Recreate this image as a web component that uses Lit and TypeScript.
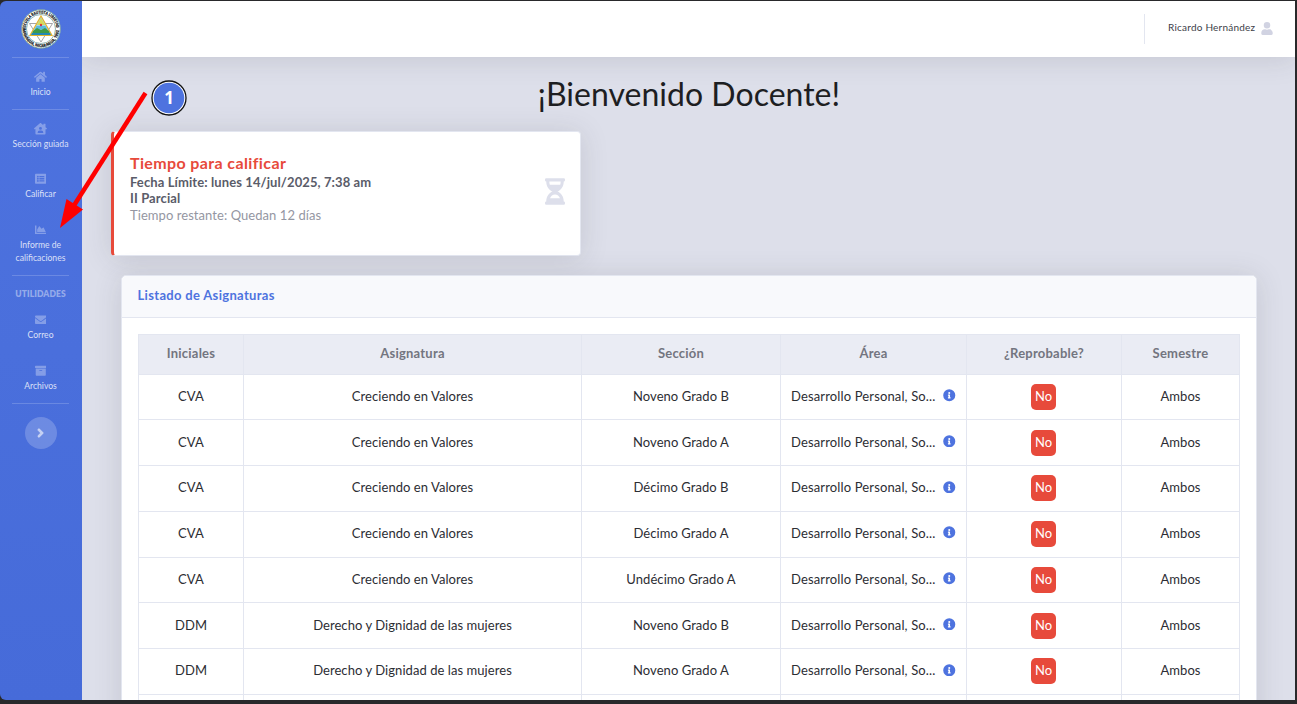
import { LitElement, html, css, svg } from "lit";
import { customElement } from "lit/decorators.js";

const ICONS: Record<string, [string, string]> = {
  home: ["0 0 576 512", "M280.37 148.26L96 300.11V464a16 16 0 0 0 16 16l112.06-.29a16 16 0 0 0 15.92-16V368a16 16 0 0 1 16-16h64a16 16 0 0 1 16 16v95.64a16 16 0 0 0 16 16.05L464 480a16 16 0 0 0 16-16V300L295.67 148.26a12.19 12.19 0 0 0-15.3 0zM571.6 251.47L488 182.56V44.05a12 12 0 0 0-12-12h-56a12 12 0 0 0-12 12v72.61L318.47 43a48 48 0 0 0-61 0L4.34 251.47a12 12 0 0 0-1.6 16.9l25.5 31A12 12 0 0 0 45.15 301l235.22-193.74a12.19 12.19 0 0 1 15.3 0L530.9 301a12 12 0 0 0 16.9-1.6l25.5-31a12 12 0 0 0-1.7-16.93z"],
  houseUser: ["0 0 576 512", "M570.7 236.3L512 184.4V48a16 16 0 0 0-16-16h-64a16 16 0 0 0-16 16v51.7L314.8 10.3C308.500 4.600 296.500 0 288 0s-20.500 4.600-26.700 10.300L5.300 236.300A18.300 18.300 0 0 0 0 248.200a18.600 18.600 0 0 0 4.200 10.700l21.400 23.800a18.200 18.200 0 0 0 11.900 5.300 18.600 18.600 0 0 0 10.700-4.200L64 269.900V480a32 32 0 0 0 32 32h384a32 32 0 0 0 32-32V269.900l15.900 14a18.600 18.600 0 0 0 10.700 4.200 18.200 18.200 0 0 0 11.900-5.300l21.400-23.800a18.600 18.600 0 0 0 4.100-10.700 18.300 18.300 0 0 0-5.300-12zM288 176a64 64 0 1 1 0 128 64 64 0 0 1 0-128zM400 448H176a16 16 0 0 1-16-16 96 96 0 0 1 96-96h64a96 96 0 0 1 96 96 16 16 0 0 1-16 16z"],
  list: ["0 0 512 512", "M464 480H48c-26.500 0-48-21.500-48-48V80c0-26.500 21.500-48 48-48h416c26.500 0 48 21.500 48 48v352c0 26.500-21.500 48-48 48zM128 120a40 40 0 1 0 0 80 40 40 0 0 0 0-80zm0 96a40 40 0 1 0 0 80 40 40 0 0 0 0-80zm0 96a40 40 0 1 0 0 80 40 40 0 0 0 0-80zm288-136v-32a12 12 0 0 0-12-12H204a12 12 0 0 0-12 12v32a12 12 0 0 0 12 12h200a12 12 0 0 0 12-12zm0 96v-32a12 12 0 0 0-12-12H204a12 12 0 0 0-12 12v32a12 12 0 0 0 12 12h200a12 12 0 0 0 12-12zm0 96v-32a12 12 0 0 0-12-12H204a12 12 0 0 0-12 12v32a12 12 0 0 0 12 12h200a12 12 0 0 0 12-12z"],
  chart: ["0 0 512 512", "M500 384c6.600 0 12 5.400 12 12v40c0 6.600-5.400 12-12 12H12c-6.600 0-12-5.400-12-12V76c0-6.600 5.400-12 12-12h40c6.600 0 12 5.400 12 12v308h436zM372.700 159.500L288 216l-85.300-113.700c-5.100-6.800-15.500-6.300-19.900 1L96 248v104h384l-89.900-187.800c-3.200-6.500-11.400-8.700-17.400-4.700z"],
  mail: ["0 0 512 512", "M502.3 190.8c3.9-3.1 9.7-.2 9.7 4.7V400c0 26.5-21.5 48-48 48H48c-26.5 0-48-21.5-48-48V195.6c0-5 5.7-7.8 9.7-4.7 22.4 17.4 52.1 39.5 154.1 113.6 21.1 15.4 56.7 47.8 92.2 47.6 35.7.3 72-32.8 92.3-47.6 102-74.1 131.6-96.3 154-113.7zM256 320c23.2.4 56.6-29.2 73.4-41.4 132.7-96.3 142.8-104.7 173.4-128.7 5.8-4.5 9.2-11.5 9.2-18.9v-19c0-26.5-21.5-48-48-48H48c-26.5 0-48 21.5-48 48v19c0 7.4 3.4 14.3 9.2 18.9 30.6 23.9 40.7 32.4 173.4 128.7 16.8 12.2 50.2 41.8 73.4 41.4z"],
  archive: ["0 0 512 512", "M32 448c0 17.7 14.3 32 32 32h384c17.7 0 32-14.3 32-32V160H32v288zm160-212c0-6.6 5.4-12 12-12h104c6.6 0 12 5.4 12 12v8c0 6.6-5.4 12-12 12H204c-6.6 0-12-5.4-12-12v-8zM480 32H32C14.3 32 0 46.3 0 64v48c0 8.8 7.2 16 16 16h480c8.8 0 16-7.2 16-16V64c0-17.7-14.3-32-32-32z"],
  user: ["0 0 448 512", "M224 256a128 128 0 1 0 0-256 128 128 0 0 0 0 256zm89.6 32h-16.7c-22.2 10.2-46.9 16-72.9 16s-50.6-5.8-72.9-16h-16.7C60.2 288 0 348.2 0 422.400V464c0 26.500 21.500 48 48 48h352c26.500 0 48-21.500 48-48v-41.600c0-74.200-60.200-134.400-134.400-134.400z"],
  info: ["0 0 512 512", "M256 8a248 248 0 1 0 0 496 248 248 0 0 0 0-496zm0 110a42 42 0 1 1 0 84 42 42 0 0 1 0-84zm56 254a12 12 0 0 1-12 12h-88a12 12 0 0 1-12-12v-24a12 12 0 0 1 12-12h12v-64h-12a12 12 0 0 1-12-12v-24a12 12 0 0 1 12-12h64a12 12 0 0 1 12 12v100h12a12 12 0 0 1 12 12v24z"],
  hourglass: ["0 0 384 512", "M360 0H24A24 24 0 0 0 0 24v16a24 24 0 0 0 24 24c0 91 51 167.700 120.800 192C75 280.300 24 357 24 448a24 24 0 0 0-24 24v16a24 24 0 0 0 24 24h336a24 24 0 0 0 24-24v-16a24 24 0 0 0-24-24c0-91-51-167.700-120.800-192C309 231.700 360 155 360 64a24 24 0 0 0 24-24V24a24 24 0 0 0-24-24zM288 384H96c17-42 50-72 96-72s79 30 96 72zM92 128c-6-20-9-42-9-64h218c0 22-3 44-9 64z"],
  angle: ["0 0 256 512", "M224.300 273l-136 136c-9.400 9.400-24.600 9.400-33.900 0l-22.600-22.600c-9.400-9.400-9.400-24.600 0-33.900l96.400-96.400-96.400-96.400c-9.400-9.400-9.400-24.600 0-33.900L54.300 103c9.400-9.400 24.600-9.400 33.900 0l136 136c9.500 9.400 9.500 24.600.1 34z"],
};

const icon = (name: string, cls: string) =>
  html`<svg class=${cls} viewBox=${ICONS[name][0]} fill="currentColor" aria-hidden="true">${svg`<path fill-rule="evenodd" d=${ICONS[name][1]}></path>`}</svg>`;

@customElement("side-bar")
class SideBar extends LitElement {
  static styles = css`
    :host { display: flex; flex-direction: column; align-items: center; width: 82px; box-sizing: border-box; padding-right: 1px; flex: none; color: rgba(255,255,255,.8);
      background: linear-gradient(#4e73df, #466bd9); border-radius: 6px 0 0 6px; overflow: hidden; font-size: 8.6px; line-height: 13px; }
    .logo { width: 40px; height: 40px; margin-top: 8px; flex: none; }
    .ring { font: 700 4px "Open Sans", sans-serif; fill: #1f2a2a; stroke: #1f2a2a; stroke-width: .25; }
    hr { width: 57px; height: 1px; border: 0; margin: 0; background: rgba(255,255,255,.18); flex: none; }
    .first { margin-top: 8px; }
    .item { display: flex; flex-direction: column; align-items: center; text-align: center; flex: none; width: 81px; box-sizing: border-box; height: 51px; padding-top: 13px; }
    .ico { height: 11.500px; color: rgba(255,255,255,.32); margin-bottom: 3.700px; }
    .grade { padding-top: 12px; }
    .report { height: 63px; padding-top: 12px; }
    .heading { font-weight: 800; font-size: 8.5px; color: rgba(255,255,255,.42); margin-top: 12px; letter-spacing: .1px; flex: none; }
    .toggle { width: 32px; height: 32px; border-radius: 50%; background: rgba(255,255,255,.2); display: flex; align-items: center; justify-content: center; margin-top: 13px; flex: none; }
    .angle { height: 14px; color: rgba(255,255,255,.6); margin-bottom: 1px; stroke: currentColor; stroke-width: 16; }
  `;
  render() {
    const item = (i: string, cls: string, label: unknown) => html`<div class="item ${cls}">${icon(i, "ico")}<span>${label}</span></div>`;
    return html`
      <svg class="logo" viewBox="0 0 40 40">
        <defs><path id="ringTop" d="M4.600 20a15.400 15.400 0 0 1 30.800 0"></path><path id="ringBottom" d="M1.900 20a18.100 18.100 0 0 0 36.200 0"></path></defs>
        <circle cx="20" cy="20" r="19.600" fill="#fff"></circle>
        <circle cx="20" cy="20" r="19.300" fill="none" stroke="#5d8f8e" stroke-width=".8"></circle>
        <circle cx="20" cy="20" r="14.500" fill="#fff" stroke="#6c9a98" stroke-width=".7"></circle>
        <text class="ring"><textPath href="#ringTop" textLength="47" lengthAdjust="spacingAndGlyphs">ESCUELA BAUTISTA LIBERTAD</textPath></text>
        <text class="ring"><textPath href="#ringBottom" textLength="55" lengthAdjust="spacingAndGlyphs">MANAGUA, NICARAGUA, 1992</textPath></text>
        <path d="M8.500 14.500h23L20 33z" fill="#fff" stroke="#9b9b9b" stroke-width=".9"></path>
        <path d="M20 7L31 26.500H9z" fill="#9ed7ef" stroke="#e6b32e" stroke-width="1.200"></path>
        <path d="M20 9l4 7h-8z" fill="#d9dc58"></path>
        <path d="M15.500 17h9l2 3.500h-13z" fill="#5bb9df"></path>
        <path d="M12 22l4-3 4 2 4-2 4 3 1 3H11z" fill="#3f9a48"></path>
        <path d="M11 24h18l1 2H10z" fill="#2389b5"></path>
        <circle cx="20" cy="16" r="1.200" fill="#d4343f"></circle>
      </svg>
      <hr class="first" />
      ${item("home", "home", "Inicio")}
      <hr />
      ${item("houseUser", "guide", "Sección guiada")}
      ${item("list", "grade", "Calificar")}
      ${item("chart", "report", html`Informe de<br />calificaciones`)}
      <hr />
      <div class="heading">UTILIDADES</div>
      ${item("mail", "mail", "Correo")}
      ${item("archive", "mail", "Archivos")}
      <hr />
      <div class="toggle">${icon("angle", "angle")}</div>`;
  }
}

const ROWS = [
  ["CVA", "Creciendo en Valores", "Noveno Grado B"],
  ["CVA", "Creciendo en Valores", "Noveno Grado A"],
  ["CVA", "Creciendo en Valores", "Décimo Grado B"],
  ["CVA", "Creciendo en Valores", "Décimo Grado A"],
  ["CVA", "Creciendo en Valores", "Undécimo Grado A"],
  ["DDM", "Derecho y Dignidad de las mujeres", "Noveno Grado B"],
  ["DDM", "Derecho y Dignidad de las mujeres", "Noveno Grado A"],
  ["", "", ""],
];

@customElement("subject-table")
class SubjectTable extends LitElement {
  static styles = css`
    :host { display: block; border-left: 1px solid #e3e6f0; border-top: 1px solid #e3e6f0; color: #2c2d33; font-size: 13px; letter-spacing: .06px; }
    .row { display: grid; grid-template-columns: 105px 338px 199px 186px 155px 118px; height: 45.75px; }
    .head { height: 39.6px; background: #eaecf4; color: #73757f; font-weight: 700; letter-spacing: .22px; }
    .cell { border-right: 1px solid #e3e6f0; border-bottom: 1px solid #e3e6f0; display: flex; align-items: center; justify-content: center; white-space: nowrap; padding: 0 0 2.400px 0; }
    .area { justify-content: flex-start; padding-left: 10px; letter-spacing: .14px; }
    .head .cell { padding-bottom: 1.800px; }
    .info { width: 12.500px; height: 12.500px; color: #4e73df; margin: 0 10.500px 1px auto; }
    .badge { background: #e74a3b; color: #fff; border-radius: 5px; width: 25px; height: 26px; line-height: 24px; text-align: center; margin: 2px 1px 0 0; }
  `;
  render() {
    return html`
      <div class="row head">${["Iniciales", "Asignatura", "Sección", "Área", "¿Reprobable?", "Semestre"].map((h) => html`<div class="cell">${h}</div>`)}</div>
      ${ROWS.map(([a, b, c]) => html`<div class="row">
        <div class="cell">${a}</div><div class="cell">${b}</div><div class="cell">${c}</div>
        ${a
          ? html`<div class="cell area"><span>Desarrollo Personal, So...</span>${icon("info", "info")}</div>
            <div class="cell"><span class="badge">No</span></div><div class="cell">Ambos</div>`
          : html`<div class="cell"></div><div class="cell"></div><div class="cell"></div>`}
      </div>`)}`;
  }
}

@customElement("app-root")
class AppRoot extends LitElement {
  static styles = css`
    :host { display: flex; box-sizing: border-box; width: 1297px; height: 704px; padding: 1px 2px 4px 0; background: #29292b; overflow: hidden; position: relative; font-family: Lato, "Open Sans", sans-serif; }
    .main { flex: 1; min-width: 0; display: flex; flex-direction: column; background: #dddfea; overflow: hidden; }
    .top { height: 56px; flex: none; background: #fff; display: flex; align-items: center; justify-content: flex-end; box-shadow: 0 2px 28px rgba(58,59,69,.15); padding-right: 22px; font-size: 10px; letter-spacing: .22px; color: #3c3e48; }
    .sep { width: 1px; height: 30px; background: #e3e6f0; margin: 0 23px 1px 0; }
    .name { width: 88px; white-space: nowrap; padding-bottom: 4px; }
    .user { width: 12px; height: 13px; color: #d1d3e2; margin: 0 0 2px 5px; }
    h1 { margin: 18px 28px 0 29px; text-align: center; font-weight: 400; font-size: 32px; line-height: 38px; color: #1d1e22; letter-spacing: .02px; white-space: nowrap; }
    .deadline { box-sizing: border-box; margin: 18px 0 0 29px; width: 470px; height: 125px; flex: none; background: #fff; border: 1px solid #e3e6f0; border-left: 3px solid #e74a3b; border-radius: 4px; box-shadow: 0 2px 28px rgba(58,59,69,.15); display: flex; align-items: center; justify-content: space-between; padding: 0 15px 5px 16px; white-space: nowrap; }
    .details { padding-bottom: 6px; }
    .t1 { color: #e74a3b; font-weight: 700; font-size: 16px; line-height: 22px; letter-spacing: .38px; }
    .t2 { color: #5a5c69; font-weight: 700; font-size: 13px; line-height: 16px; letter-spacing: .1px; }
    .t3 { color: #9496a2; font-size: 13px; line-height: 19px; letter-spacing: .06px; }
    .glass { width: 20px; height: 27px; color: #dddfeb; }
    .card { margin: 19px 0 0 39px; height: 500px; flex: none; background: #fff; border: 1px solid #e3e6f0; border-radius: 5px; box-shadow: 0 2px 28px rgba(58,59,69,.15); box-sizing: border-box; width: 1136px; }
    .cardhead { height: 41px; border-bottom: 1px solid #e3e6f0; background: #f8f9fc; border-radius: 5px 5px 0 0; color: #4e73df; font-weight: 700; font-size: 13px; line-height: 38px; padding-left: 15.500px; letter-spacing: .32px; }
    .body { padding: 16px; }
    .notes { position: absolute; left: 0; top: 0; width: 200px; height: 240px; }
    .step { font: 700 17px "Open Sans", sans-serif; fill: #fff; }
  `;
  render() {
    return html`
      <side-bar></side-bar>
      <div class="main">
        <div class="top"><span class="sep"></span><span class="name">Ricardo Hernández</span>${icon("user", "user")}</div>
        <h1>¡Bienvenido Docente!</h1>
        <section class="deadline">
          <div class="details">
            <div class="t1">Tiempo para calificar</div>
            <div class="t2">Fecha Límite: lunes 14/jul/2025, 7:38 am</div>
            <div class="t2">II Parcial</div>
            <div class="t3">Tiempo restante: Quedan 12 días</div>
          </div>
          ${icon("hourglass", "glass")}
        </section>
        <section class="card">
          <div class="cardhead">Listado de Asignaturas</div>
          <div class="body"><subject-table></subject-table></div>
        </section>
      </div>
      <svg class="notes" viewBox="0 0 200 240">
        <path d="M145.500 93L73 207" stroke="#f00" stroke-width="4.500"></path>
        <path d="M60 228L66.500 199L83 209.500z" fill="#f00"></path>
        <circle cx="169" cy="98" r="17" fill="#fff" stroke="#111" stroke-width="1.300"></circle>
        <circle cx="169" cy="98" r="15.300" fill="#4e73df"></circle>
        <text class="step" x="169" y="104" text-anchor="middle">1</text>
      </svg>`;
  }
}
